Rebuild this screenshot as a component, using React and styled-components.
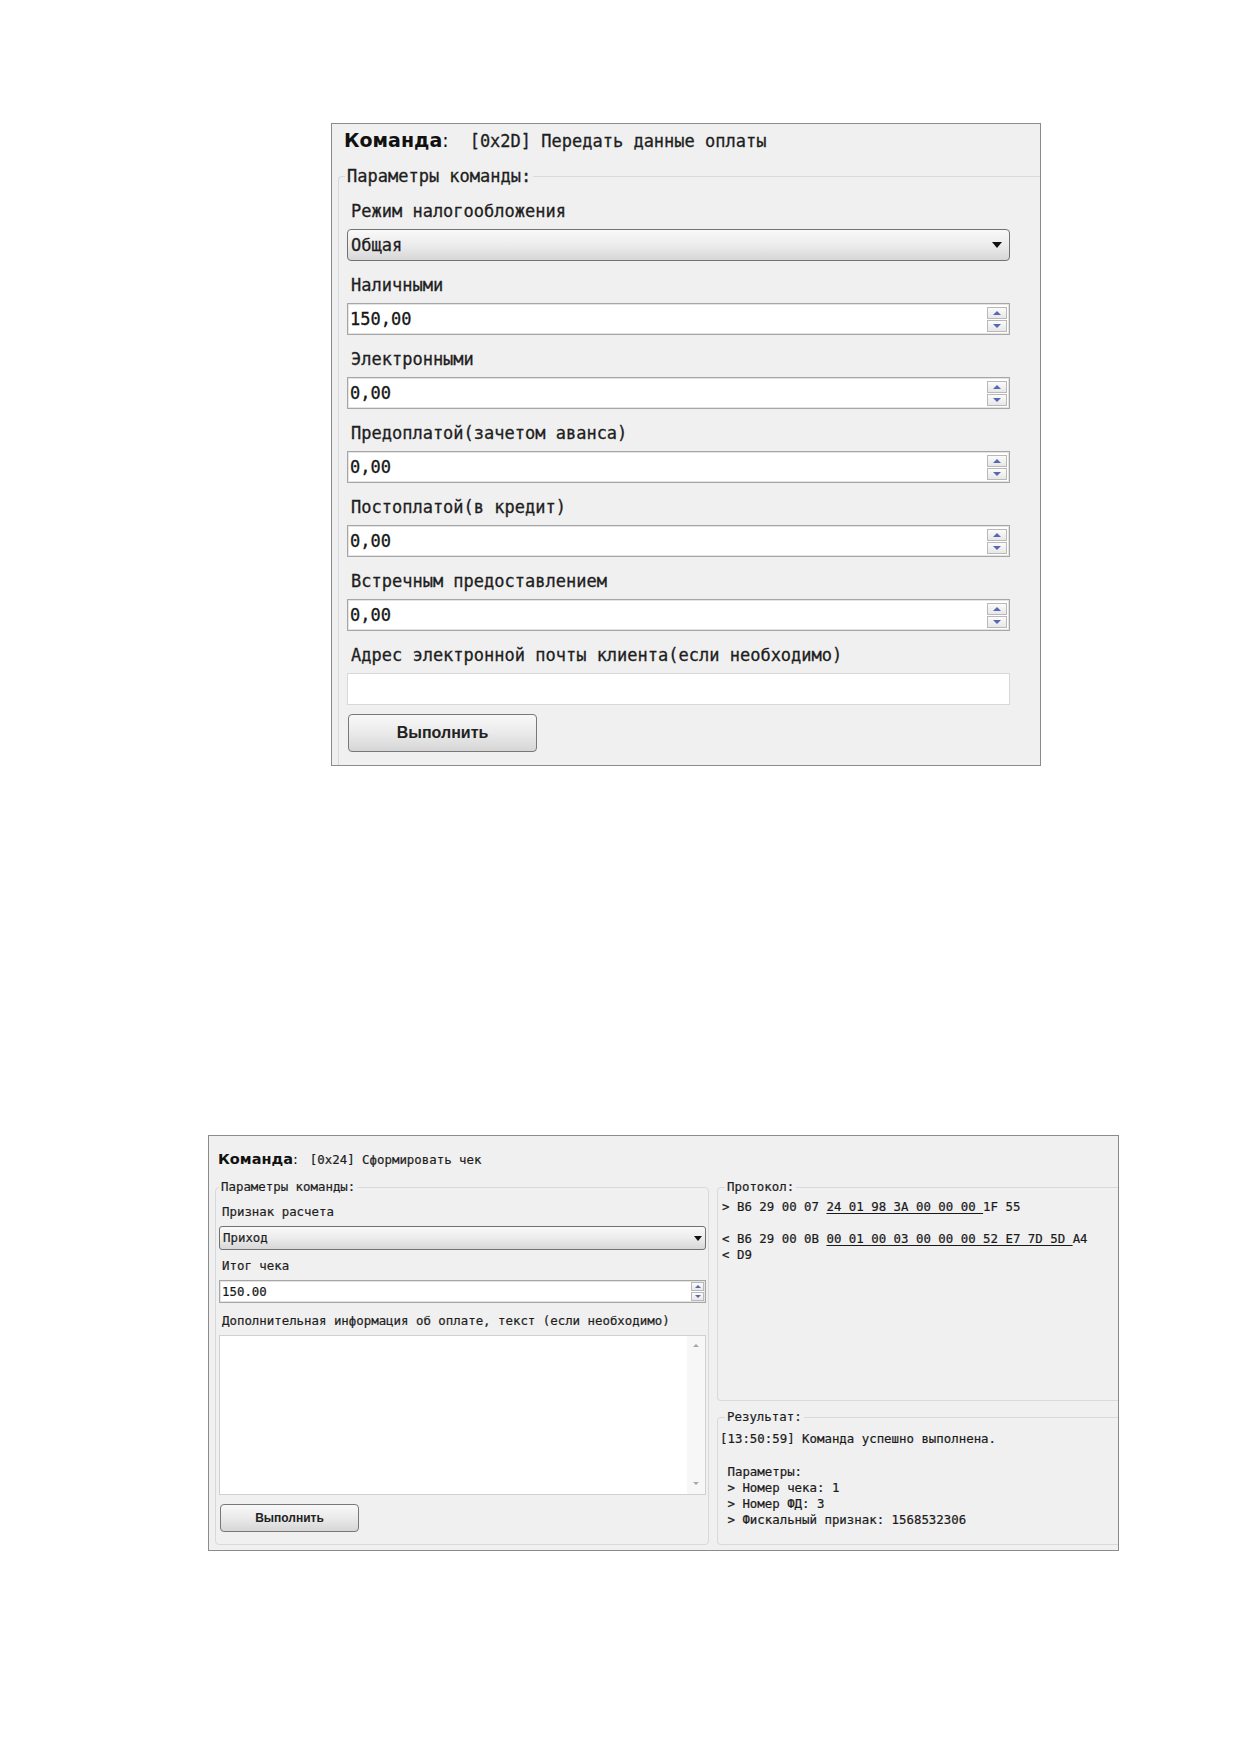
import React from 'react'
import styled, { createGlobalStyle, ThemeProvider, css } from 'styled-components'

const GlobalStyle = createGlobalStyle`
  html, body {
    margin: 0;
    background: #fff;
  }
  body {
    font-family: 'DejaVu Sans Mono', 'Liberation Mono', monospace;
    color: #1e1e1e;
  }
  * {
    box-sizing: border-box;
  }
`

// metrics of the two command forms
const paymentForm = {
  top: 123,
  left: 331,
  width: 710,
  height: 643,
  font: 17,
  line: 20,
  stroke: 0.3,
  title: 19,
  titleH: 33,
  titleTop: 0,
  titlePad: 12,
  cmdGap: 21,
  combo: 32,
  input: 32,
  radius: 4,
  spinW: 20,
  spinH: 12,
  spinPad: 2,
  tri: 4,
  arrowW: 10,
  arrowH: 6,
  arrowPad: 7,
  labelPad: 4,
  labelGap: 8,
  fieldGap: 14,
  btnW: 189,
  btnH: 38,
  btnFont: 16,
  btnTop: 9,
}

const receiptForm = {
  top: 369,
  left: 208,
  width: 911,
  height: 416,
  font: 12.4,
  line: 16,
  stroke: 0.2,
  title: 14.5,
  titleH: 22,
  titleTop: 12,
  titlePad: 9,
  cmdGap: 12,
  combo: 24,
  input: 23,
  radius: 3,
  spinW: 13,
  spinH: 9,
  spinPad: 1,
  tri: 3,
  arrowW: 8,
  arrowH: 5,
  arrowPad: 3,
  labelPad: 3,
  labelGap: 6,
  fieldGap: 8,
  btnW: 139,
  btnH: 28,
  btnFont: 12,
  btnTop: 9,
}

const Page = styled.div`
  display: flex;
  flex-direction: column;
  align-items: flex-start;
  padding-bottom: 200px;
`

const Window = styled.section`
  display: flex;
  flex-direction: column;
  width: ${p => p.theme.width}px;
  height: ${p => p.theme.height}px;
  margin: ${p => p.theme.top}px 0 0 ${p => p.theme.left}px;
  border: 1px solid #8b8b8b;
  background: #f0f0f0;
  font-size: ${p => p.theme.font}px;
  line-height: ${p => p.theme.line}px;
  color: #1e1e1e;
  -webkit-text-stroke: ${p => p.theme.stroke}px currentColor;
`

const TitleRow = styled.div`
  display: flex;
  align-items: baseline;
  height: ${p => p.theme.titleH}px;
  margin-top: ${p => p.theme.titleTop}px;
  padding-left: ${p => p.theme.titlePad}px;
  line-height: ${p => p.theme.titleH}px;
`

const TitleWord = styled.span`
  font-family: 'DejaVu Sans', Verdana, sans-serif;
  font-size: ${p => p.theme.title}px;
  font-weight: ${p => (p.$plain ? 400 : 700)};
  color: #111;
  -webkit-text-stroke: 0;
`

const CommandName = styled.span`
  margin-left: ${p => p.theme.cmdGap}px;
`

const GroupBox = styled.fieldset`
  display: flex;
  flex-direction: column;
  min-width: 0;
  margin: 0;
  padding: 0;
  border: 1px solid #d7dadc;
  border-radius: 4px;
  ${p =>
    p.$open &&
    css`
      border-right: none;
      border-bottom: none;
      border-radius: 4px 0 0 0;
    `}
  ${p =>
    p.$flush &&
    css`
      border-right: none;
      border-radius: 4px 0 0 4px;
    `}
`

const MainGroup = styled(GroupBox)`
  flex: 1;
  margin: 9px 0 0 6px;
`

const Legend = styled.legend`
  padding: 0 2px;
  margin-left: ${p => p.$indent}px;
  line-height: ${p => p.theme.line}px;
`

const GroupContent = styled.div`
  flex: 1;
  display: flex;
  flex-direction: column;
  padding: ${p => p.$pad};
`

const FieldList = styled.div`
  display: flex;
  flex-direction: column;
  gap: ${p => p.theme.fieldGap}px;
`

const Field = styled.div`
  margin-top: ${p => p.$shift || 0}px;
`

const FieldLabel = styled.div`
  padding-left: ${p => p.theme.labelPad}px;
  margin-bottom: ${p => p.theme.labelGap}px;
  white-space: pre;
`

const ComboBox = styled.div`
  display: flex;
  align-items: center;
  justify-content: space-between;
  height: ${p => p.theme.combo}px;
  padding: 0 ${p => p.theme.arrowPad}px 0 3px;
  border: 1px solid #727272;
  border-radius: ${p => p.theme.radius}px;
  background: linear-gradient(#f9f9f9 0%, #ececec 50%, #d7d7d7 100%);
`

const DropArrow = styled.span`
  width: 0;
  height: 0;
  border-left: ${p => p.theme.arrowW / 2}px solid transparent;
  border-right: ${p => p.theme.arrowW / 2}px solid transparent;
  border-top: ${p => p.theme.arrowH}px solid #111;
`

const InputBox = styled.div`
  display: flex;
  align-items: center;
  height: ${p => p.theme.input}px;
  padding: 0 ${p => p.theme.spinPad}px 0 2px;
  background: #fff;
  border: 1px solid ${p => (p.$soft ? '#d8d8d8' : '#a6a6a6')};
  box-shadow: ${p => (p.$soft ? 'none' : 'inset 0 0 0 1px #e4e4e4')};
`

const Value = styled.span`
  flex: 1;
  color: #161616;
`

const Spinner = styled.div`
  display: flex;
  flex-direction: column;
  gap: 1px;
`

const SpinButton = styled.div`
  display: flex;
  align-items: center;
  justify-content: center;
  width: ${p => p.theme.spinW}px;
  height: ${p => p.theme.spinH}px;
  border: 1px solid #b9b9b9;
  background: linear-gradient(#fbfbfb, #e7e7e7);
`

const Triangle = styled.span`
  width: 0;
  height: 0;
  border-left: ${p => p.theme.tri}px solid transparent;
  border-right: ${p => p.theme.tri}px solid transparent;
  ${p =>
    p.$down
      ? css`border-top: ${p.theme.tri}px solid ${p.$color || '#5667b3'};`
      : css`border-bottom: ${p.theme.tri}px solid ${p.$color || '#5667b3'};`}
`

const MemoBox = styled.div`
  display: flex;
  height: 160px;
  background: #fff;
  border: 1px solid #d0d0d0;
`

const MemoText = styled.div`
  flex: 1;
`

const ScrollTrack = styled.div`
  display: flex;
  flex-direction: column;
  justify-content: space-between;
  align-items: center;
  width: 18px;
  padding: 8px 0 9px;
  background: #f7f7f7;
`

const RunButton = styled.button`
  width: ${p => p.theme.btnW}px;
  height: ${p => p.theme.btnH}px;
  margin: ${p => p.theme.btnTop}px 0 0 1px;
  padding: 0;
  border: 1px solid #787878;
  border-radius: 4px;
  background: linear-gradient(#f8f8f8 0%, #eaeaea 50%, #d6d6d6 100%);
  font-family: 'Liberation Sans', Arial, sans-serif;
  font-size: ${p => p.theme.btnFont}px;
  font-weight: 700;
  color: #222;
  -webkit-text-stroke: 0;
`

const Columns = styled.div`
  flex: 1;
  display: grid;
  grid-template-columns: 494px 1fr;
  column-gap: 8px;
  margin: 9px 0 5px 6px;
`

const SideColumn = styled.div`
  display: flex;
  flex-direction: column;
`

const ProtocolBox = styled(GroupBox)`
  flex: 0 0 222px;
`

const ResultBox = styled(GroupBox)`
  flex: 1;
  margin-top: 8px;
`

const LogText = styled.div`
  white-space: pre;
  line-height: ${p => p.$line}px;
  color: #1a1a1a;
`

const Frame = styled.u`
  text-decoration-thickness: 1px;
  text-underline-offset: 2px;
`

function Title({ children }) {
  return (
    <TitleRow>
      <TitleWord>Команда</TitleWord>
      <TitleWord $plain>:</TitleWord>
      <CommandName>{children}</CommandName>
    </TitleRow>
  )
}

function SpinField({ value }) {
  return (
    <InputBox>
      <Value>{value}</Value>
      <Spinner>
        <SpinButton>
          <Triangle />
        </SpinButton>
        <SpinButton>
          <Triangle $down />
        </SpinButton>
      </Spinner>
    </InputBox>
  )
}

const payments = [
  ['Наличными', '150,00'],
  ['Электронными', '0,00'],
  ['Предоплатой(зачетом аванса)', '0,00'],
  ['Постоплатой(в кредит)', '0,00'],
  ['Встречным предоставлением', '0,00'],
]

function PaymentForm() {
  return (
    <ThemeProvider theme={paymentForm}>
      <Window>
        <Title>[0x2D] Передать данные оплаты</Title>
        <MainGroup $open>
          <Legend $indent={6}>Параметры команды:</Legend>
          <GroupContent $pad="15px 30px 0 8px">
            <FieldList>
              <Field>
                <FieldLabel>Режим налогообложения</FieldLabel>
                <ComboBox>
                  <span>Общая</span>
                  <DropArrow />
                </ComboBox>
              </Field>
              {payments.map(([label, value]) => (
                <Field key={label}>
                  <FieldLabel>{label}</FieldLabel>
                  <SpinField value={value} />
                </Field>
              ))}
              <Field>
                <FieldLabel>Адрес электронной почты клиента(если необходимо)</FieldLabel>
                <InputBox $soft />
              </Field>
            </FieldList>
            <RunButton>Выполнить</RunButton>
          </GroupContent>
        </MainGroup>
      </Window>
    </ThemeProvider>
  )
}

function ReceiptForm() {
  return (
    <ThemeProvider theme={receiptForm}>
      <Window>
        <Title>[0x24] Сформировать чек</Title>
        <Columns>
          <GroupBox>
            <Legend $indent={3}>Параметры команды:</Legend>
            <GroupContent $pad="9px 2px 0 3px">
              <FieldList>
                <Field>
                  <FieldLabel>Признак расчета</FieldLabel>
                  <ComboBox>
                    <span>Приход</span>
                    <DropArrow />
                  </ComboBox>
                </Field>
                <Field>
                  <FieldLabel>Итог чека</FieldLabel>
                  <SpinField value="150.00" />
                </Field>
                <Field $shift={2}>
                  <FieldLabel>Дополнительная информация об оплате, текст (если необходимо)</FieldLabel>
                  <MemoBox>
                    <MemoText />
                    <ScrollTrack>
                      <Triangle $color="#a8a8a8" />
                      <Triangle $down $color="#a8a8a8" />
                    </ScrollTrack>
                  </MemoBox>
                </Field>
              </FieldList>
              <RunButton>Выполнить</RunButton>
            </GroupContent>
          </GroupBox>

          <SideColumn>
            <ProtocolBox $flush>
              <Legend $indent={7}>Протокол:</Legend>
              <GroupContent $pad="4px 0 0 4px">
                <LogText $line={16}>
                  {'> B6 29 00 07 '}
                  <Frame>{'24 01 98 3A 00 00 00 '}</Frame>
                  {'1F 55\n\n< B6 29 00 0B '}
                  <Frame>{'00 01 00 03 00 00 00 52 E7 7D 5D '}</Frame>
                  {'A4\n< D9'}
                </LogText>
              </GroupContent>
            </ProtocolBox>
            <ResultBox $flush>
              <Legend $indent={7}>Результат:</Legend>
              <GroupContent $pad="6px 0 0 2px">
                <LogText $line={16.3}>
                  {[
                    '[13:50:59] Команда успешно выполнена.',
                    '',
                    ' Параметры:',
                    ' > Номер чека: 1',
                    ' > Номер ФД: 3',
                    ' > Фискальный признак: 1568532306',
                  ].join('\n')}
                </LogText>
              </GroupContent>
            </ResultBox>
          </SideColumn>
        </Columns>
      </Window>
    </ThemeProvider>
  )
}

export default function App() {
  return (
    <>
      <GlobalStyle />
      <Page>
        <PaymentForm />
        <ReceiptForm />
      </Page>
    </>
  )
}
